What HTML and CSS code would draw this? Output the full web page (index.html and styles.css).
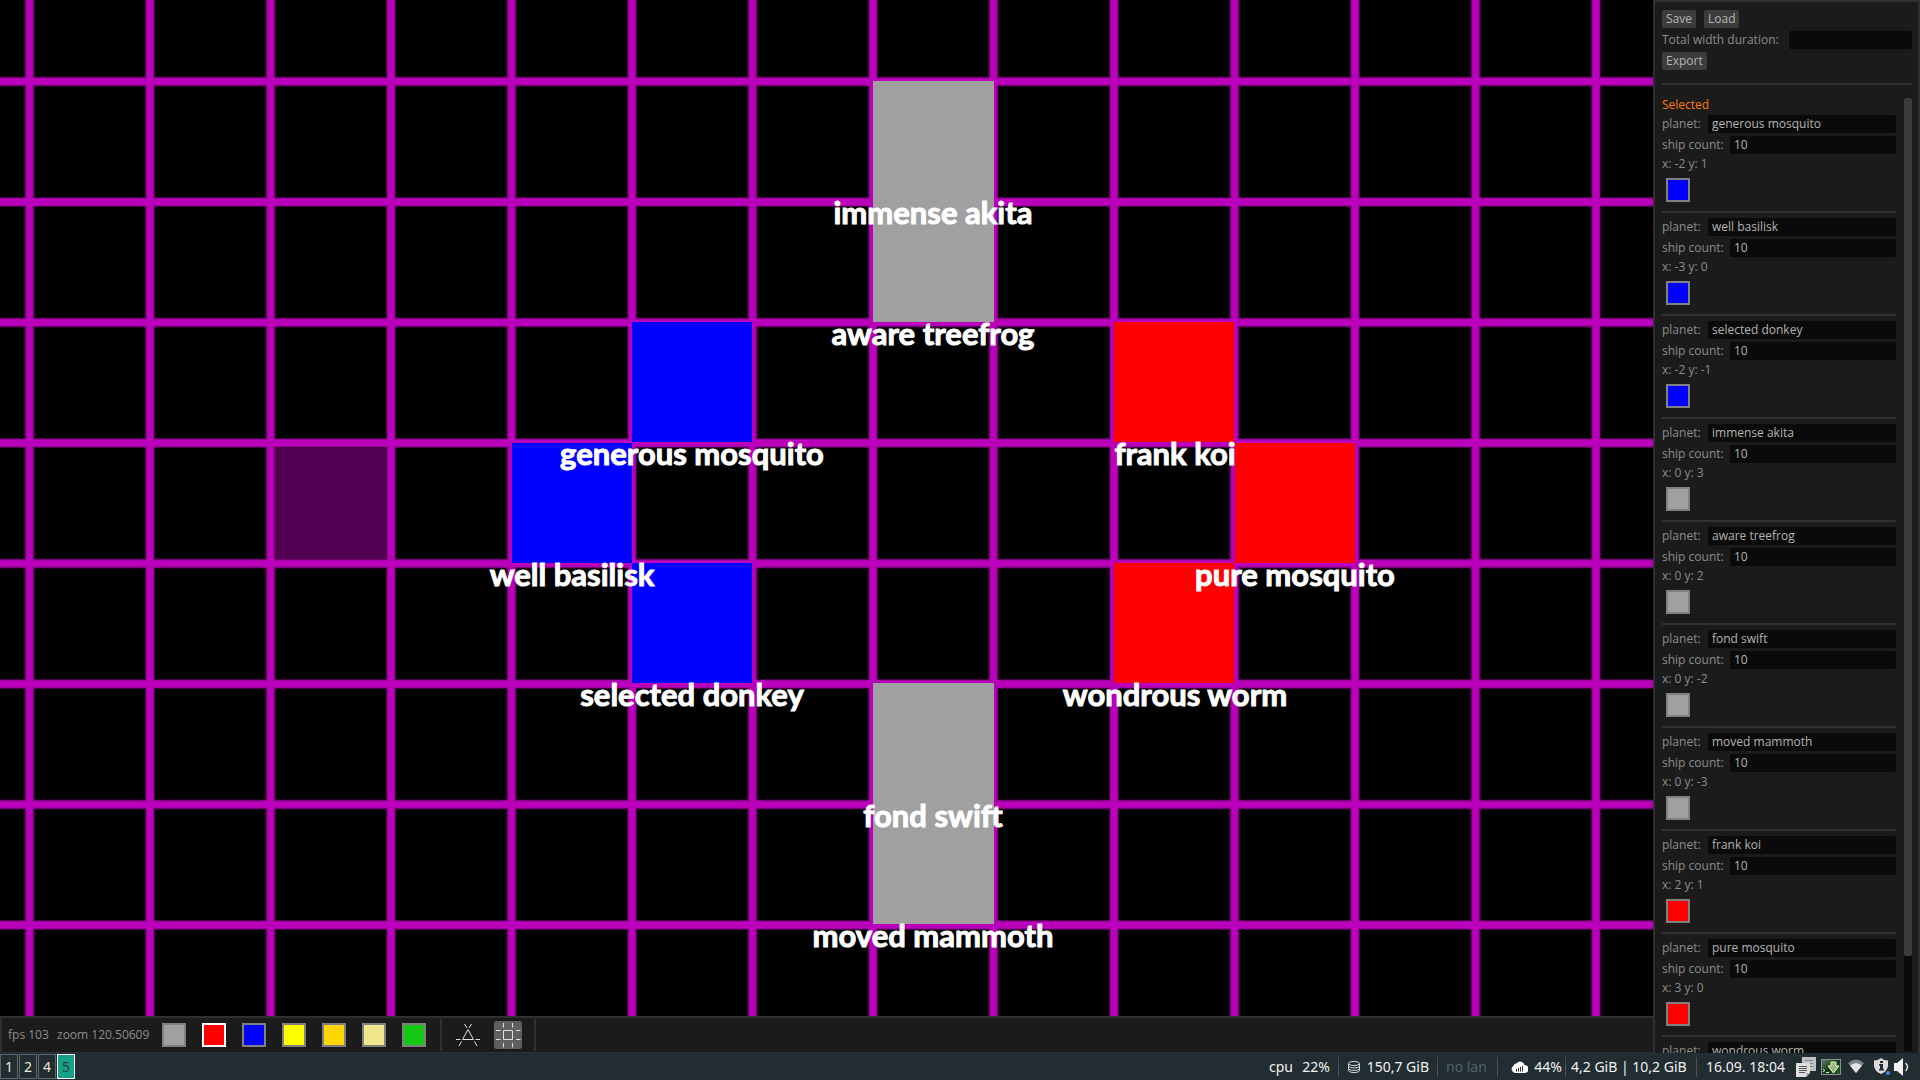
FILE: index.html
```html
<!DOCTYPE html>
<html lang="en">
<head>
<meta charset="utf-8">
<title>Planet map editor</title>
<link rel="stylesheet" href="styles.css">
</head>
<body>
<div class="editor">
  <main class="stage">
    <svg class="map" role="img" aria-label="Planet map">
      <defs>
        <pattern id="grid" x="29.5" y="81.5" width="120.5" height="120.5" patternUnits="userSpaceOnUse">
          <path class="grid-edge" d="M0 0H120.500M0 120.500H120.500M0 0V120.500M120.500 0V120.500"/>
          <path class="grid-mid" d="M0 0H120.500M0 120.500H120.500M0 0V120.500M120.500 0V120.500"/>
          <path class="grid-core" d="M0 0H120.500M0 120.500H120.500M0 0V120.500M120.500 0V120.500"/>
        </pattern>
      </defs>
      <rect class="hover" x="270" y="443" width="121" height="121"/>
      <rect width="100%" height="100%" fill="url(#grid)"/>
      <g class="blue">
        <rect x="632" y="322" width="120" height="120"/>
        <rect x="512" y="443" width="120" height="120"/>
        <rect x="632" y="563" width="120" height="120"/>
      </g>
      <g class="grey">
        <rect x="873" y="81" width="121" height="241"/>
        <rect x="873" y="683" width="121" height="241"/>
      </g>
      <g class="red">
        <rect x="1114" y="322" width="120" height="120"/>
        <rect x="1235" y="443" width="120" height="120"/>
        <rect x="1114" y="563" width="120" height="120"/>
      </g>
      <g class="names">
        <text x="692" y="465">generous mosquito</text>
        <text x="572" y="586">well basilisk</text>
        <text x="692" y="706">selected donkey</text>
        <text x="933" y="224">immense akita</text>
        <text x="933" y="345">aware treefrog</text>
        <text x="933" y="827">fond swift</text>
        <text x="933" y="947">moved mammoth</text>
        <text x="1175" y="465">frank koi</text>
        <text x="1295" y="586">pure mosquito</text>
        <text x="1175" y="706">wondrous worm</text>
      </g>
    </svg>
    <div class="toolbar">
      <span class="fps">fps 103</span>
      <span class="zoom">zoom 120.50609</span>
      <div class="palette">
        <button class="swatch grey" aria-label="Grey"></button>
        <button class="swatch red picked" aria-label="Red"></button>
        <button class="swatch blue" aria-label="Blue"></button>
        <button class="swatch yellow" aria-label="Yellow"></button>
        <button class="swatch gold" aria-label="Gold"></button>
        <button class="swatch khaki" aria-label="Khaki"></button>
        <button class="swatch green" aria-label="Green"></button>
      </div>
      <div class="tools">
        <button class="tool" aria-label="Rotate symmetry">
          <svg width="28" height="28" viewBox="0 0 28 28"><path d="M14 8.500L8.500 18.500H19.500ZM2 18.500H6.500M21.500 18.500H26M13 7L10.500 3M15 7L17.500 3M7.500 20.500L5 25M20.500 20.500L23 25"/></svg>
        </button>
        <button class="tool active" aria-label="Select area">
          <svg width="28" height="28" viewBox="0 0 28 28"><path d="M9.500 9.500H18.500V18.500H9.500ZM9.500 2V6.500M18.500 2V6.500M9.500 22V26.500M18.500 22V26.500M2 9.500H6.500M2 18.500H6.500M22 9.500H26.500M22 18.500H26.500"/></svg>
        </button>
      </div>
    </div>
  </main>
  <aside class="side">
    <div class="row"><button class="btn">Save</button><button class="btn">Load</button></div>
    <div class="row"><label class="l-wide" for="dur">Total width duration:</label><input id="dur" type="text"></div>
    <div class="row"><button class="btn">Export</button></div>
    <div class="scroll">
      <div class="list">
        <h2>Selected</h2>
        <section class="planet">
          <div class="row"><label class="l-name" for="n1">planet:</label><input id="n1" type="text" value="generous mosquito"></div>
          <div class="row"><label class="l-count" for="c1">ship count:</label><input id="c1" type="text" value="10"></div>
          <p>x: -2 y: 1</p>
          <button class="swatch blue" aria-label="Owner colour"></button>
        </section>
        <section class="planet">
          <div class="row"><label class="l-name" for="n2">planet:</label><input id="n2" type="text" value="well basilisk"></div>
          <div class="row"><label class="l-count" for="c2">ship count:</label><input id="c2" type="text" value="10"></div>
          <p>x: -3 y: 0</p>
          <button class="swatch blue" aria-label="Owner colour"></button>
        </section>
        <section class="planet">
          <div class="row"><label class="l-name" for="n3">planet:</label><input id="n3" type="text" value="selected donkey"></div>
          <div class="row"><label class="l-count" for="c3">ship count:</label><input id="c3" type="text" value="10"></div>
          <p>x: -2 y: -1</p>
          <button class="swatch blue" aria-label="Owner colour"></button>
        </section>
        <section class="planet">
          <div class="row"><label class="l-name" for="n4">planet:</label><input id="n4" type="text" value="immense akita"></div>
          <div class="row"><label class="l-count" for="c4">ship count:</label><input id="c4" type="text" value="10"></div>
          <p>x: 0 y: 3</p>
          <button class="swatch grey" aria-label="Owner colour"></button>
        </section>
        <section class="planet">
          <div class="row"><label class="l-name" for="n5">planet:</label><input id="n5" type="text" value="aware treefrog"></div>
          <div class="row"><label class="l-count" for="c5">ship count:</label><input id="c5" type="text" value="10"></div>
          <p>x: 0 y: 2</p>
          <button class="swatch grey" aria-label="Owner colour"></button>
        </section>
        <section class="planet">
          <div class="row"><label class="l-name" for="n6">planet:</label><input id="n6" type="text" value="fond swift"></div>
          <div class="row"><label class="l-count" for="c6">ship count:</label><input id="c6" type="text" value="10"></div>
          <p>x: 0 y: -2</p>
          <button class="swatch grey" aria-label="Owner colour"></button>
        </section>
        <section class="planet">
          <div class="row"><label class="l-name" for="n7">planet:</label><input id="n7" type="text" value="moved mammoth"></div>
          <div class="row"><label class="l-count" for="c7">ship count:</label><input id="c7" type="text" value="10"></div>
          <p>x: 0 y: -3</p>
          <button class="swatch grey" aria-label="Owner colour"></button>
        </section>
        <section class="planet">
          <div class="row"><label class="l-name" for="n8">planet:</label><input id="n8" type="text" value="frank koi"></div>
          <div class="row"><label class="l-count" for="c8">ship count:</label><input id="c8" type="text" value="10"></div>
          <p>x: 2 y: 1</p>
          <button class="swatch red" aria-label="Owner colour"></button>
        </section>
        <section class="planet">
          <div class="row"><label class="l-name" for="n9">planet:</label><input id="n9" type="text" value="pure mosquito"></div>
          <div class="row"><label class="l-count" for="c9">ship count:</label><input id="c9" type="text" value="10"></div>
          <p>x: 3 y: 0</p>
          <button class="swatch red" aria-label="Owner colour"></button>
        </section>
        <section class="planet">
          <div class="row"><label class="l-name" for="n10">planet:</label><input id="n10" type="text" value="wondrous worm"></div>
        </section>
      </div>
      <div class="track"><div class="thumb"></div></div>
    </div>
  </aside>
</div>
<footer class="taskbar">
  <nav class="spaces">
    <button>1</button><button>2</button><button>4</button><button class="current">5</button>
  </nav>
  <div class="status">
    <span class="item cpu"><span>cpu</span><span>22%</span></span>
    <span class="item disk">
      <svg width="12" height="12" viewBox="0 0 12 12" fill="none" stroke="#d5d8d9"><ellipse cx="6" cy="2.500" rx="5.500" ry="2"/><path d="M.5 2.500V9.500C.5 12.200 11.500 12.200 11.500 9.500V2.500M.5 5C.5 7.500 11.500 7.500 11.500 5M.5 7.500C.5 10 11.500 10 11.500 7.500"/></svg>
      <span>150,7 GiB</span></span>
    <span class="item lan">no lan</span>
    <span class="item load">
      <svg width="17" height="12" viewBox="0 0 17 12"><path fill="#fff" d="M4 12A4 4 0 0 1 2.500 4.700A3 3 0 0 1 5.500 2.500A4.500 4.500 0 0 1 13.500 4A4 4 0 0 1 13.500 12Z"/><path stroke="#222d32" d="M5.500 10.500V8M7.500 10.500V7M9.500 10.500V6M11.500 10.500V5"/></svg>
      <span>44%</span></span>
    <span class="item mem">4,2 GiB | 10,2 GiB</span>
    <time class="clock">16.09. 18:04</time>
  </div>
  <div class="tray">
    <svg width="20" height="20" viewBox="0 0 20 20"><path fill="#bfc1c2" d="M6 0H20V14H6Z"/><path stroke="#888" d="M9 3.500H17M13 6.500H17M14 9.500H17"/><path fill="#dedede" d="M0 6H14V16L10 20H0Z"/><path fill="#aaa" d="M14 16L10 20V16Z"/><path stroke="#555" d="M3 9.500H11M3 11.500H11M3 13.500H11M3 15.500H9"/></svg>
    <svg width="20" height="16" viewBox="0 0 20 16"><defs><linearGradient id="scr" x2="1" y2="1"><stop stop-color="#5d8a68"/><stop offset=".5" stop-color="#12381a"/><stop offset="1" stop-color="#245c26"/></linearGradient></defs><rect x=".5" y=".5" width="19" height="15" fill="url(#scr)" stroke="#8b9090"/><path d="M2 10L4 11.500L2 13M5 13.500H8" fill="none" stroke="#cfe0cf"/><path d="M10 3H15V7H18L12.500 14L7 7H10Z" fill="#9cb57c" stroke="#f0f5b8"/></svg>
    <svg width="16" height="15" viewBox="0 0 16 15"><path fill="#7c8386" d="M0 4Q8-3 16 4L8 14Z"/><path fill="#e3e3e3" d="M2 6.500Q8 1.500 14 6.500L8 14Z"/></svg>
    <svg width="18" height="18" viewBox="0 0 18 18"><path fill="#dcdcdc" d="M7 0Q10 2.500 14 2.500V8Q13.500 13 7 16Q.5 13 0 8V2.500Q4 2.500 7 0Z"/><path fill="#222d32" d="M6 3H9V5H6ZM5 6H9V11H10V12.500H5V11H6V7.500H5Z"/><circle cx="14" cy="15" r="2" fill="#4287f5"/></svg>
    <svg width="16" height="18" viewBox="0 0 16 18"><path fill="#f2f2f2" d="M0 5H3L9 0V18L3 13H0Z"/><path fill="none" stroke="#e0e0e0" stroke-width="1.500" d="M11.500 5Q15.500 9 11.500 13"/></svg>
  </div>
</footer>
</body>
</html>
```
FILE: styles.css
```css
* { box-sizing: border-box; }
body {
  margin: 0;
  height: 100vh;
  display: flex;
  flex-direction: column;
  background: #000;
  overflow: hidden;
}
button, input, h2, p { margin: 0; font: inherit; color: inherit; }
button { padding: 0; border: 0; }

.editor {
  flex: 1;
  min-height: 0;
  display: flex;
  font: 12px/14px "Open Sans", "Noto Sans", sans-serif;
  color: #8c8c8c;
}
.stage { flex: 1; min-width: 0; display: flex; flex-direction: column; }

.map { flex: 1; min-height: 0; width: 100%; display: block; background: #000; }
.grid-edge { stroke: #480048; stroke-width: 10px; }
.grid-mid { stroke: #a000a0; stroke-width: 8px; }
.grid-core { stroke: #ba00ba; stroke-width: 6px; }
.hover { fill: #520052; }
.names {
  font: bold 31px Lato, "Open Sans", sans-serif;
  fill: #fff;
  stroke: #fff;
  stroke-width: 1px;
  text-anchor: middle;
}

.grey { fill: #a0a0a0; background: #a0a0a0; }
.red { fill: #f00; background: #f00; }
.blue { fill: #00f; background: #00f; }
.yellow { background: #ff0; }
.gold { background: #ffd700; }
.khaki { background: #f0e68c; }
.green { background: #14c814; }

.toolbar {
  height: 37px;
  display: flex;
  align-items: center;
  padding-left: 6px;
  background: #1b1b1b;
  border: 2px solid #303030;
  border-width: 2px 0 1px 2px;
}
.fps { width: 49px; }
.zoom { width: 105px; }
.palette { display: flex; gap: 16px; }
.swatch { display: block; width: 24px; height: 24px; border: 2px solid #808080; }
.picked { border: 2px solid #fff; }
.tools {
  display: flex;
  gap: 12px;
  align-items: center;
  height: 32px;
  margin-left: 14px;
  padding: 0 12px;
  border: 2px solid #303030;
  border-width: 0 2px;
}
.tool { width: 28px; height: 28px; border-radius: 3px; background: none; }
.tool svg { display: block; fill: none; stroke: #e0e0e0; }
.active { background: #606060; }

.side {
  width: 267px;
  display: flex;
  flex-direction: column;
  gap: 3px;
  padding: 8px 6px 0 7px;
  background: #1b1b1b;
  border: 2px solid #303030;
  border-width: 2px 2px 0 2px;
}
.row { display: flex; align-items: center; gap: 8px; height: 18px; }
.btn { height: 18px; padding: 0 4px; border-radius: 2px; background: #3c3c3c; color: #b4b4b4; }
input {
  flex: 1;
  min-width: 0;
  height: 18px;
  padding: 0 4px 1px;
  border: 0;
  border-radius: 2px;
  background: #0a0a0a;
  color: #b4b4b4;
}
label { white-space: nowrap; }
.l-wide { width: 119px; }
.l-name { width: 38px; }
.l-count { width: 60px; }

.scroll {
  flex: 1;
  min-height: 0;
  display: flex;
  gap: 8px;
  margin-top: 10px;
  padding-top: 11px;
  border-top: 2px solid #303030;
}
.list { flex: 1; min-width: 0; overflow: hidden; }
.list h2 { font-weight: 400; line-height: 18px; color: #ff7800; margin-bottom: 1px; }
.planet {
  display: flex;
  flex-direction: column;
  gap: 3px;
  padding-bottom: 9px;
  margin-bottom: 5px;
  border-bottom: 2px solid #303030;
}
.planet .swatch { margin: 4px 0 0 4px; }
.track { width: 8px; margin: 2px 0; border-radius: 2px; background: #0a0a0a; }
.thumb { height: 90%; border-radius: 2px; background: #3c3c3c; }

.taskbar {
  height: 27px;
  display: flex;
  align-items: center;
  padding-right: 10px;
  background: #222d32;
  font: 14px/20px "Noto Sans", "Open Sans", sans-serif;
  color: #f0f0f0;
}
.spaces { display: flex; gap: 1px; }
.spaces button {
  width: 18px;
  height: 25px;
  border: 1px solid #5f676a;
  background: #222d32;
  color: #eee8d5;
}
.spaces .current { background: #16a085; border-color: #fff; color: #29413f; }
.status { display: flex; margin-left: auto; white-space: nowrap; }
.item {
  display: flex;
  align-items: center;
  justify-content: space-between;
  padding-right: 8px;
  border-right: 1px solid #4c5250;
}
.cpu { width: 70px; }
.disk { width: 99px; padding-left: 9px; }
.lan { width: 60px; padding-left: 8px; color: #4f636c; }
.load { width: 68px; padding: 0 3px 0 13px; }
.mem { width: 131px; padding: 0 4px 0 5px; }
.clock { width: 99px; padding-left: 9px; }
.tray { display: grid; grid-template-columns: 25px 27px 26px 20px 16px; align-items: center; }
```
